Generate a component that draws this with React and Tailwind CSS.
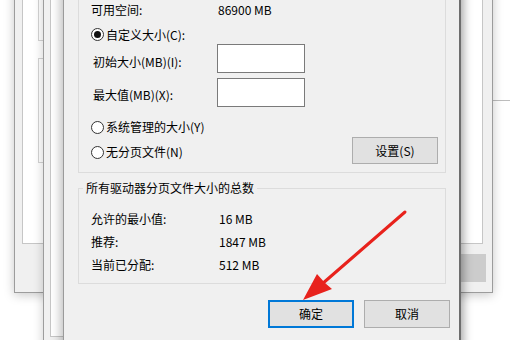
import React from "react";

function Radio({ checked }) {
  return (
    <span className="w-[13px] h-[13px] mr-[2px] rounded-full border border-[#333333] bg-white flex items-center justify-center shrink-0">
      {checked && <span className="w-[7px] h-[7px] rounded-full bg-[#111111]" />}
    </span>
  );
}

function Btn({ children, primary, w = "w-[86px]" }) {
  return (
    <div
      className={
        "h-[28px] " +
        w +
        " bg-[#e1e1e1] flex items-center justify-center text-[12px] leading-none " +
        (primary ? "border-2 border-[#0078d7]" : "border border-[#adadad]")
      }
    >
      {children}
    </div>
  );
}

export default function App() {
  return (
    <div className="relative w-[510px] h-[340px] overflow-hidden bg-white text-black font-['Noto_Sans_CJK_SC','Noto_Sans',sans-serif]">
      {/* stray line of a far window */}
      <div className="absolute top-[100px] left-[493px] w-[17px] h-px bg-[#bdbdbd]" />

      {/* back window 1 */}
      <div className="absolute left-[14px] top-[-20px] w-[479px] h-[313px] bg-[#f0f0f0] border border-[#9c9c9c] shadow-[0_2px_10px_rgba(0,0,0,0.22)] flex flex-col">
        <div className="ml-[7px] mr-[9px] h-[263px] bg-white border-r border-b border-l border-[#c6c6c6] flex flex-col">
          <div className="ml-[15px] w-[420px] h-[60px] border-l border-b border-[#d4d4d4]" />
          <div className="ml-[15px] mt-[17px] w-[420px] h-[105px] border border-[#d4d4d4]" />
        </div>
        <div className="flex justify-end pr-[6px] mt-[10px]">
          <div className="w-[90px] h-[28px] bg-[#cccccc]" />
        </div>
      </div>

      {/* back window 2 */}
      <div className="absolute left-[43px] top-[-20px] w-[417px] h-[380px] bg-[#f0f0f0] border-l border-[#9c9c9c] shadow-[0_0_10px_rgba(0,0,0,0.2)] flex flex-col">
        <div className="ml-[6px] h-[357px] bg-white border-l border-b border-[#c6c6c6]" />
      </div>

      {/* front dialog */}
      <div className="absolute left-[63px] top-[-40px] w-[398px] h-[400px] bg-[#f0f0f0] border-l border-[#9a9a9a] border-r-2 border-r-[#6e6e6e] shadow-[0_0_10px_2px_rgba(0,0,0,0.28)] pt-[20px] flex flex-col text-[12px]">
        {/* group 1 */}
        <div className="ml-[14px] w-[368px] border border-[#dcdcdc] pt-[19px] pb-[8px] flex flex-col">
          <div className="h-[20px] pl-[12px] flex items-center leading-[20px]">
            <span className="w-[127px]">可用空间:</span>
            <span>86900 MB</span>
          </div>
          <div className="mt-[5px] h-[19px] pl-[12px] flex items-center leading-[19px]">
            <Radio checked />
            <span>自定义大小(C):</span>
          </div>
          <div className="h-[29px] pl-[14px] flex items-start">
            <span className="w-[124px] pt-[8px] leading-[20px]">初始大小(MB)(I):</span>
            <div className="w-[88px] h-[29px] bg-white border border-[#7a7a7a]" />
          </div>
          <div className="mt-[5px] h-[29px] pl-[14px] flex items-start">
            <span className="w-[124px] pt-[7px] leading-[20px]">最大值(MB)(X):</span>
            <div className="w-[88px] h-[29px] bg-white border border-[#7a7a7a]" />
          </div>
          <div className="mt-[10px] h-[20px] pl-[12px] flex items-center leading-[20px]">
            <Radio />
            <span>系统管理的大小(Y)</span>
          </div>
          <div className="h-[27px] pl-[12px] pr-[7px] flex items-start justify-between">
            <div className="pt-[5px] h-[25px] flex items-center leading-[20px]">
              <Radio />
              <span>无分页文件(N)</span>
            </div>
            <div className="w-[86px] h-[27px] bg-[#e1e1e1] border border-[#adadad] flex items-center justify-center leading-none">
              设置(S)
            </div>
          </div>
        </div>

        {/* group 2 */}
        <div className="relative mt-[15px] ml-[14px] w-[368px] border border-[#dcdcdc] pt-[18px] pb-[7px] flex flex-col">
          <span className="absolute left-[4px] top-[-9px] px-[3px] leading-[16px] bg-[#f0f0f0]">
            所有驱动器分页文件大小的总数
          </span>
          <div className="h-[23px] pl-[12px] flex items-center leading-[23px]">
            <span className="w-[128px]">允许的最小值:</span>
            <span>16 MB</span>
          </div>
          <div className="h-[23px] pl-[12px] flex items-center leading-[23px]">
            <span className="w-[128px]">推荐:</span>
            <span>1847 MB</span>
          </div>
          <div className="h-[23px] pl-[12px] flex items-center leading-[23px]">
            <span className="w-[128px]">当前已分配:</span>
            <span>512 MB</span>
          </div>
        </div>

        {/* buttons */}
        <div className="mt-[16px] flex justify-end gap-[10px] pr-[9px]">
          <Btn primary>确定</Btn>
          <Btn>取消</Btn>
        </div>
      </div>

      {/* red arrow */}
      <svg className="absolute inset-0 pointer-events-none" width="510" height="340" viewBox="0 0 510 340">
        <line x1="405" y1="212" x2="322" y2="284" stroke="#e8221c" strokeWidth="3" strokeLinecap="round" />
        <polygon points="303,300 317,274 325,283 332,289" fill="#e8221c" />
      </svg>
    </div>
  );
}
